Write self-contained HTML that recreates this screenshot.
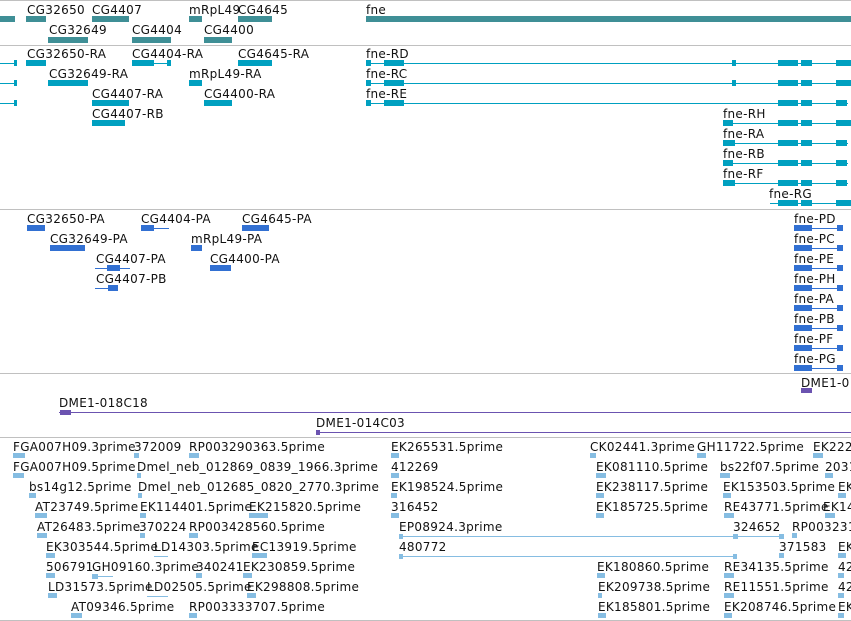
<!DOCTYPE html>
<html><head><meta charset="utf-8"><style>
html,body{margin:0;padding:0;background:#fff;}
body{width:851px;height:621px;position:relative;overflow:hidden;font-family:"DejaVu Sans","Liberation Sans",sans-serif;font-size:12px;color:#111;}
.t{position:absolute;line-height:12px;white-space:nowrap;margin-top:1px;letter-spacing:0.3px;}
.d{position:absolute;left:0;width:851px;height:1px;background:#c0c0c0;}
.g{position:absolute;height:6px;background:#3f8f96;}
.c{position:absolute;height:6px;background:#00a0c0;}
.cl{position:absolute;height:1px;background:#00a0c0;}
.p{position:absolute;height:6px;background:#3270d2;}
.pl{position:absolute;height:1px;background:#3270d2;}
.m{position:absolute;height:1px;background:#6b53b0;}
.e{position:absolute;height:5px;width:12px;background:#86bde2;}
.el{position:absolute;height:1px;background:#86bde2;}
</style></head><body>
<div class="d" style="top:0"></div>
<div class="d" style="top:45px"></div>
<div class="d" style="top:209px"></div>
<div class="d" style="top:373px"></div>
<div class="d" style="top:437px"></div>
<div class="d" style="top:620px"></div>

<!-- genes -->
<div class="g" style="left:0;width:15px;top:16px"></div>
<div class="t" style="left:27px;top:3px">CG32650</div><div class="g" style="left:26px;width:20px;top:16px"></div>
<div class="t" style="left:92px;top:3px">CG4407</div><div class="g" style="left:92px;width:37px;top:16px"></div>
<div class="t" style="left:189px;top:3px">mRpL49</div><div class="g" style="left:189px;width:13px;top:16px"></div>
<div class="t" style="left:238px;top:3px">CG4645</div><div class="g" style="left:238px;width:34px;top:16px"></div>
<div class="t" style="left:366px;top:3px">fne</div><div class="g" style="left:366px;width:485px;top:16px"></div>
<div class="t" style="left:49px;top:23px">CG32649</div><div class="g" style="left:48px;width:40px;top:37px"></div>
<div class="t" style="left:132px;top:23px">CG4404</div><div class="g" style="left:132px;width:39px;top:37px"></div>
<div class="t" style="left:204px;top:23px">CG4400</div><div class="g" style="left:204px;width:28px;top:37px"></div>

<!-- transcripts -->
<div class="cl" style="left:0;width:17px;top:63px"></div><div class="c" style="left:14px;width:3px;top:60px"></div>
<div class="cl" style="left:0;width:17px;top:83px"></div><div class="c" style="left:14px;width:3px;top:80px"></div>
<div class="cl" style="left:0;width:17px;top:103px"></div><div class="c" style="left:14px;width:3px;top:100px"></div>
<div class="t" style="left:27px;top:47px">CG32650-RA</div><div class="c" style="left:26px;width:20px;top:60px"></div>
<div class="t" style="left:132px;top:47px">CG4404-RA</div><div class="c" style="left:132px;width:22px;top:60px"></div><div class="cl" style="left:132px;width:39px;top:63px"></div><div class="c" style="left:167px;width:4px;top:60px"></div>
<div class="t" style="left:238px;top:47px">CG4645-RA</div><div class="c" style="left:238px;width:34px;top:60px"></div>
<div class="t" style="left:49px;top:67px">CG32649-RA</div><div class="c" style="left:48px;width:40px;top:80px"></div>
<div class="t" style="left:189px;top:67px">mRpL49-RA</div><div class="c" style="left:189px;width:13px;top:80px"></div>
<div class="t" style="left:92px;top:87px">CG4407-RA</div><div class="c" style="left:92px;width:37px;top:100px"></div>
<div class="t" style="left:204px;top:87px">CG4400-RA</div><div class="c" style="left:204px;width:28px;top:100px"></div>
<div class="t" style="left:92px;top:107px">CG4407-RB</div><div class="c" style="left:92px;width:33px;top:120px"></div>

<div class="t" style="left:366px;top:47px">fne-RD</div><div class="cl" style="left:366px;width:485px;top:63px"></div><div class="c" style="left:366px;width:5px;top:60px"></div><div class="c" style="left:384px;width:20px;top:60px"></div><div class="c" style="left:732px;width:4px;top:60px"></div><div class="c" style="left:778px;width:20px;top:60px"></div><div class="c" style="left:801px;width:11px;top:60px"></div><div class="c" style="left:836px;width:15px;top:60px"></div>
<div class="t" style="left:366px;top:67px">fne-RC</div><div class="cl" style="left:366px;width:485px;top:83px"></div><div class="c" style="left:366px;width:5px;top:80px"></div><div class="c" style="left:384px;width:20px;top:80px"></div><div class="c" style="left:732px;width:4px;top:80px"></div><div class="c" style="left:778px;width:20px;top:80px"></div><div class="c" style="left:801px;width:11px;top:80px"></div><div class="c" style="left:836px;width:15px;top:80px"></div>
<div class="t" style="left:366px;top:87px">fne-RE</div><div class="cl" style="left:366px;width:482px;top:103px"></div><div class="c" style="left:366px;width:5px;top:100px"></div><div class="c" style="left:384px;width:20px;top:100px"></div><div class="c" style="left:778px;width:20px;top:100px"></div><div class="c" style="left:801px;width:11px;top:100px"></div><div class="c" style="left:836px;width:11px;top:100px"></div>
<div class="t" style="left:723px;top:107px">fne-RH</div><div class="cl" style="left:723px;width:128px;top:123px"></div><div class="c" style="left:723px;width:10px;top:120px"></div><div class="c" style="left:778px;width:20px;top:120px"></div><div class="c" style="left:801px;width:11px;top:120px"></div><div class="c" style="left:836px;width:15px;top:120px"></div>
<div class="t" style="left:723px;top:127px">fne-RA</div><div class="cl" style="left:723px;width:125px;top:143px"></div><div class="c" style="left:723px;width:12px;top:140px"></div><div class="c" style="left:778px;width:20px;top:140px"></div><div class="c" style="left:801px;width:11px;top:140px"></div><div class="c" style="left:836px;width:11px;top:140px"></div>
<div class="t" style="left:723px;top:147px">fne-RB</div><div class="cl" style="left:723px;width:125px;top:163px"></div><div class="c" style="left:723px;width:10px;top:160px"></div><div class="c" style="left:778px;width:20px;top:160px"></div><div class="c" style="left:801px;width:11px;top:160px"></div><div class="c" style="left:836px;width:11px;top:160px"></div>
<div class="t" style="left:723px;top:167px">fne-RF</div><div class="cl" style="left:723px;width:125px;top:183px"></div><div class="c" style="left:723px;width:12px;top:180px"></div><div class="c" style="left:778px;width:20px;top:180px"></div><div class="c" style="left:801px;width:11px;top:180px"></div><div class="c" style="left:836px;width:11px;top:180px"></div>
<div class="t" style="left:769px;top:187px">fne-RG</div><div class="cl" style="left:770px;width:81px;top:203px"></div><div class="c" style="left:778px;width:20px;top:200px"></div><div class="c" style="left:801px;width:11px;top:200px"></div><div class="c" style="left:836px;width:15px;top:200px"></div>

<!-- proteins -->
<div class="t" style="left:27px;top:212px">CG32650-PA</div><div class="p" style="left:27px;width:18px;top:225px"></div>
<div class="t" style="left:141px;top:212px">CG4404-PA</div><div class="p" style="left:141px;width:13px;top:225px"></div><div class="pl" style="left:141px;width:28px;top:228px"></div>
<div class="t" style="left:242px;top:212px">CG4645-PA</div><div class="p" style="left:242px;width:27px;top:225px"></div>
<div class="t" style="left:50px;top:232px">CG32649-PA</div><div class="p" style="left:50px;width:35px;top:245px"></div>
<div class="t" style="left:191px;top:232px">mRpL49-PA</div><div class="p" style="left:191px;width:11px;top:245px"></div>
<div class="t" style="left:96px;top:252px">CG4407-PA</div><div class="pl" style="left:95px;width:35px;top:268px"></div><div class="p" style="left:107px;width:13px;top:265px"></div>
<div class="t" style="left:210px;top:252px">CG4400-PA</div><div class="p" style="left:210px;width:21px;top:265px"></div>
<div class="t" style="left:96px;top:272px">CG4407-PB</div><div class="pl" style="left:95px;width:23px;top:288px"></div><div class="p" style="left:108px;width:10px;top:285px"></div>

<div class="t" style="left:794px;top:212px">fne-PD</div><div class="p" style="left:794px;width:18px;top:225px"></div><div class="pl" style="left:794px;width:49px;top:228px"></div><div class="p" style="left:837px;width:6px;top:225px"></div>
<div class="t" style="left:794px;top:232px">fne-PC</div><div class="p" style="left:794px;width:18px;top:245px"></div><div class="pl" style="left:794px;width:49px;top:248px"></div><div class="p" style="left:837px;width:6px;top:245px"></div>
<div class="t" style="left:794px;top:252px">fne-PE</div><div class="p" style="left:794px;width:18px;top:265px"></div><div class="pl" style="left:794px;width:49px;top:268px"></div><div class="p" style="left:837px;width:6px;top:265px"></div>
<div class="t" style="left:794px;top:272px">fne-PH</div><div class="p" style="left:794px;width:18px;top:285px"></div><div class="pl" style="left:794px;width:49px;top:288px"></div><div class="p" style="left:837px;width:6px;top:285px"></div>
<div class="t" style="left:794px;top:292px">fne-PA</div><div class="p" style="left:794px;width:18px;top:305px"></div><div class="pl" style="left:794px;width:49px;top:308px"></div><div class="p" style="left:837px;width:6px;top:305px"></div>
<div class="t" style="left:794px;top:312px">fne-PB</div><div class="p" style="left:794px;width:18px;top:325px"></div><div class="pl" style="left:794px;width:49px;top:328px"></div><div class="p" style="left:837px;width:6px;top:325px"></div>
<div class="t" style="left:794px;top:332px">fne-PF</div><div class="p" style="left:794px;width:18px;top:345px"></div><div class="pl" style="left:794px;width:49px;top:348px"></div><div class="p" style="left:837px;width:6px;top:345px"></div>
<div class="t" style="left:794px;top:352px">fne-PG</div><div class="p" style="left:794px;width:18px;top:365px"></div><div class="pl" style="left:794px;width:49px;top:368px"></div><div class="p" style="left:837px;width:6px;top:365px"></div>

<!-- DME -->
<div class="t" style="left:801px;top:376px">DME1-0</div><div style="position:absolute;left:801px;top:388px;width:11px;height:5px;background:#6b53b0"></div>
<div class="t" style="left:59px;top:396px">DME1-018C18</div><div class="m" style="left:59px;width:792px;top:412px"></div><div style="position:absolute;left:60px;top:410px;width:11px;height:5px;background:#6b53b0"></div>
<div class="t" style="left:316px;top:416px">DME1-014C03</div><div class="m" style="left:316px;width:535px;top:432px"></div><div style="position:absolute;left:316px;top:430px;width:4px;height:5px;background:#6b53b0"></div>

<!-- ESTs -->
<div class="t" style="left:13px;top:440px">FGA007H09.3prime</div><div class="e" style="left:13px;top:453px"></div>
<div class="t" style="left:134px;top:440px">372009</div><div class="e" style="left:134px;top:453px;width:5px"></div>
<div class="t" style="left:189px;top:440px">RP003290363.5prime</div><div class="e" style="left:189px;top:453px;width:10px"></div>
<div class="t" style="left:391px;top:440px">EK265531.5prime</div><div class="e" style="left:391px;top:453px;width:8px"></div>
<div class="t" style="left:590px;top:440px">CK02441.3prime</div><div class="e" style="left:590px;top:453px;width:6px"></div>
<div class="t" style="left:697px;top:440px">GH11722.5prime</div><div class="e" style="left:697px;top:453px;width:9px"></div>
<div class="t" style="left:813px;top:440px">EK222</div><div class="e" style="left:813px;top:453px;width:10px"></div>

<div class="t" style="left:13px;top:460px">FGA007H09.5prime</div><div class="e" style="left:13px;top:473px;width:11px"></div>
<div class="t" style="left:137px;top:460px">Dmel_neb_012869_0839_1966.3prime</div><div class="e" style="left:137px;top:473px;width:4px"></div>
<div class="t" style="left:391px;top:460px">412269</div><div class="e" style="left:391px;top:473px;width:8px"></div>
<div class="t" style="left:596px;top:460px">EK081110.5prime</div><div class="e" style="left:596px;top:473px;width:10px"></div>
<div class="t" style="left:720px;top:460px">bs22f07.5prime</div><div class="e" style="left:720px;top:473px;width:10px"></div>
<div class="t" style="left:825px;top:460px">2031</div><div class="e" style="left:825px;top:473px;width:8px"></div>

<div class="t" style="left:29px;top:480px">bs14g12.5prime</div><div class="e" style="left:29px;top:493px;width:7px"></div>
<div class="t" style="left:138px;top:480px">Dmel_neb_012685_0820_2770.3prime</div><div class="e" style="left:138px;top:493px;width:4px"></div>
<div class="t" style="left:391px;top:480px">EK198524.5prime</div><div class="e" style="left:391px;top:493px;width:6px"></div>
<div class="t" style="left:596px;top:480px">EK238117.5prime</div><div class="e" style="left:596px;top:493px;width:8px"></div>
<div class="t" style="left:723px;top:480px">EK153503.5prime</div><div class="e" style="left:723px;top:493px;width:8px"></div>
<div class="t" style="left:838px;top:480px">EK</div><div class="e" style="left:838px;top:493px;width:8px"></div>

<div class="t" style="left:35px;top:500px">AT23749.5prime</div><div class="e" style="left:35px;top:513px"></div>
<div class="t" style="left:140px;top:500px">EK114401.5prime</div><div class="e" style="left:140px;top:513px;width:6px"></div>
<div class="t" style="left:249px;top:500px">EK215820.5prime</div><div class="e" style="left:249px;top:513px;width:19px"></div>
<div class="t" style="left:391px;top:500px">316452</div><div class="e" style="left:391px;top:513px;width:8px"></div>
<div class="t" style="left:596px;top:500px">EK185725.5prime</div><div class="e" style="left:596px;top:513px;width:8px"></div>
<div class="t" style="left:724px;top:500px">RE43771.5prime</div><div class="e" style="left:724px;top:513px;width:10px"></div>
<div class="t" style="left:823px;top:500px">EK14</div><div class="e" style="left:825px;top:513px;width:10px"></div>

<div class="t" style="left:37px;top:520px">AT26483.5prime</div><div class="e" style="left:37px;top:533px;width:10px"></div>
<div class="t" style="left:139px;top:520px">370224</div><div class="e" style="left:140px;top:533px;width:5px"></div>
<div class="t" style="left:189px;top:520px">RP003428560.5prime</div><div class="e" style="left:189px;top:533px;width:9px"></div>
<div class="t" style="left:399px;top:520px">EP08924.3prime</div><div class="el" style="left:399px;width:384px;top:536px"></div><div class="e" style="left:399px;top:534px;width:4px"></div><div class="e" style="left:733px;top:534px;width:5px"></div><div class="e" style="left:779px;top:534px;width:5px"></div>
<div class="t" style="left:733px;top:520px">324652</div>
<div class="t" style="left:792px;top:520px">RP003231</div><div class="e" style="left:792px;top:533px;width:5px"></div>

<div class="t" style="left:46px;top:540px">EK303544.5prime</div><div class="e" style="left:46px;top:553px;width:9px"></div>
<div class="t" style="left:154px;top:540px">LD14303.5prime</div><div class="el" style="left:154px;width:14px;top:556px"></div>
<div class="t" style="left:252px;top:540px">EC13919.5prime</div><div class="e" style="left:252px;top:553px;width:15px"></div>
<div class="t" style="left:399px;top:540px">480772</div><div class="el" style="left:399px;width:337px;top:556px"></div><div class="e" style="left:399px;top:554px;width:4px"></div><div class="e" style="left:733px;top:554px;width:4px"></div>
<div class="t" style="left:779px;top:540px">371583</div><div class="e" style="left:779px;top:553px;width:5px"></div>
<div class="t" style="left:838px;top:540px">EK</div><div class="e" style="left:838px;top:553px;width:8px"></div>

<div class="t" style="left:46px;top:560px">506791</div><div class="e" style="left:46px;top:573px;width:9px"></div>
<div class="t" style="left:92px;top:560px">GH09160.3prime</div><div class="el" style="left:92px;width:21px;top:576px"></div><div class="e" style="left:92px;top:574px;width:6px"></div>
<div class="t" style="left:196px;top:560px">340241</div><div class="e" style="left:196px;top:573px;width:6px"></div>
<div class="t" style="left:243px;top:560px">EK230859.5prime</div><div class="e" style="left:243px;top:573px;width:9px"></div>
<div class="t" style="left:597px;top:560px">EK180860.5prime</div><div class="e" style="left:597px;top:573px;width:8px"></div>
<div class="t" style="left:724px;top:560px">RE34135.5prime</div><div class="e" style="left:724px;top:573px;width:10px"></div>
<div class="t" style="left:838px;top:560px">42</div><div class="e" style="left:838px;top:573px;width:6px"></div>

<div class="t" style="left:48px;top:580px">LD31573.5prime</div><div class="e" style="left:48px;top:593px;width:9px"></div>
<div class="t" style="left:147px;top:580px">LD02505.5prime</div><div class="el" style="left:147px;width:21px;top:596px"></div>
<div class="t" style="left:247px;top:580px">EK298808.5prime</div><div class="e" style="left:247px;top:593px;width:9px"></div>
<div class="t" style="left:598px;top:580px">EK209738.5prime</div><div class="e" style="left:598px;top:593px;width:4px"></div>
<div class="t" style="left:724px;top:580px">RE11551.5prime</div><div class="e" style="left:724px;top:593px;width:10px"></div>
<div class="t" style="left:838px;top:580px">42</div><div class="e" style="left:838px;top:593px;width:6px"></div>

<div class="t" style="left:71px;top:600px">AT09346.5prime</div><div class="e" style="left:71px;top:613px;width:11px"></div>
<div class="t" style="left:189px;top:600px">RP003333707.5prime</div><div class="e" style="left:189px;top:613px;width:8px"></div>
<div class="t" style="left:598px;top:600px">EK185801.5prime</div><div class="e" style="left:598px;top:613px;width:8px"></div>
<div class="t" style="left:724px;top:600px">EK208746.5prime</div><div class="e" style="left:724px;top:613px;width:8px"></div>
<div class="t" style="left:838px;top:600px">EK</div><div class="e" style="left:838px;top:613px;width:6px"></div>
</body></html>
